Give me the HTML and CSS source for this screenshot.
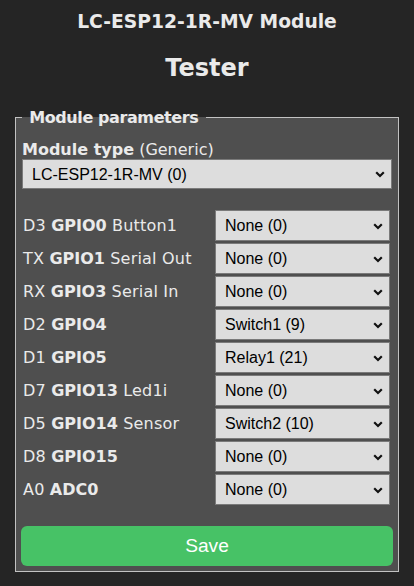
FILE: index.html
```html
<!DOCTYPE html>
<html>
<head>
<meta charset="utf-8">
<title>LC-ESP12-1R-MV Module - Configure Module</title>
<link rel="stylesheet" href="styles.css">
</head>
<body>
<div class="page">
  <header class="head">
    <h3 class="dev">LC-ESP12-1R-MV Module</h3>
    <h2 class="name">Tester</h2>
  </header>
  <fieldset class="params">
    <legend class="legend"><b>&nbsp;Module parameters&nbsp;</b></legend>
    <div class="mtype"><b>Module type</b> (Generic)</div>
    <div class="sel">
      <select class="select"><option>LC-ESP12-1R-MV (0)</option></select>
      <svg class="chev" width="10" height="7" viewBox="0 0 10 7"><polyline points="1.2,1.3 5,5 8.8,1.3" fill="none" stroke="#111" stroke-width="2.2"/></svg>
    </div>
    <div class="gpio">
      <div class="lbl">D3 <b>GPIO0</b> Button1</div>
      <div class="sel"><select class="select"><option>None (0)</option></select><svg class="chev" width="10" height="7" viewBox="0 0 10 7"><polyline points="1.2,1.3 5,5 8.8,1.3" fill="none" stroke="#111" stroke-width="2.2"/></svg></div>
      <div class="lbl">TX <b>GPIO1</b> Serial Out</div>
      <div class="sel"><select class="select"><option>None (0)</option></select><svg class="chev" width="10" height="7" viewBox="0 0 10 7"><polyline points="1.2,1.3 5,5 8.8,1.3" fill="none" stroke="#111" stroke-width="2.2"/></svg></div>
      <div class="lbl">RX <b>GPIO3</b> Serial In</div>
      <div class="sel"><select class="select"><option>None (0)</option></select><svg class="chev" width="10" height="7" viewBox="0 0 10 7"><polyline points="1.2,1.3 5,5 8.8,1.3" fill="none" stroke="#111" stroke-width="2.2"/></svg></div>
      <div class="lbl">D2 <b>GPIO4</b></div>
      <div class="sel"><select class="select"><option>Switch1 (9)</option></select><svg class="chev" width="10" height="7" viewBox="0 0 10 7"><polyline points="1.2,1.3 5,5 8.8,1.3" fill="none" stroke="#111" stroke-width="2.2"/></svg></div>
      <div class="lbl">D1 <b>GPIO5</b></div>
      <div class="sel"><select class="select"><option>Relay1 (21)</option></select><svg class="chev" width="10" height="7" viewBox="0 0 10 7"><polyline points="1.2,1.3 5,5 8.8,1.3" fill="none" stroke="#111" stroke-width="2.2"/></svg></div>
      <div class="lbl">D7 <b>GPIO13</b> Led1i</div>
      <div class="sel"><select class="select"><option>None (0)</option></select><svg class="chev" width="10" height="7" viewBox="0 0 10 7"><polyline points="1.2,1.3 5,5 8.8,1.3" fill="none" stroke="#111" stroke-width="2.2"/></svg></div>
      <div class="lbl">D5 <b>GPIO14</b> Sensor</div>
      <div class="sel"><select class="select"><option>Switch2 (10)</option></select><svg class="chev" width="10" height="7" viewBox="0 0 10 7"><polyline points="1.2,1.3 5,5 8.8,1.3" fill="none" stroke="#111" stroke-width="2.2"/></svg></div>
      <div class="lbl">D8 <b>GPIO15</b></div>
      <div class="sel"><select class="select"><option>None (0)</option></select><svg class="chev" width="10" height="7" viewBox="0 0 10 7"><polyline points="1.2,1.3 5,5 8.8,1.3" fill="none" stroke="#111" stroke-width="2.2"/></svg></div>
      <div class="lbl">A0 <b>ADC0</b></div>
      <div class="sel"><select class="select"><option>None (0)</option></select><svg class="chev" width="10" height="7" viewBox="0 0 10 7"><polyline points="1.2,1.3 5,5 8.8,1.3" fill="none" stroke="#111" stroke-width="2.2"/></svg></div>
    </div>
    <button class="save" type="button">Save</button>
  </fieldset>
</div>
</body>
</html>
```

FILE: styles.css
```css
html, body {
  margin: 0;
  padding: 0;
  background: #252525;
}
body {
  font-family: "DejaVu Sans", Verdana, sans-serif;
  font-size: 16px;
  color: #eaeaea;
}
.page {
  padding-top: 11px;
}
.head {
  text-align: center;
}
.dev {
  margin: 0;
  font-size: 18.72px;
  line-height: 22px;
  font-weight: bold;
}
.name {
  margin: 21px 0 0;
  font-size: 24px;
  line-height: 28px;
  font-weight: bold;
}
.params {
  margin: 26px 15px 0;
  padding: 13px 6px 5px;
  border: 1px solid #c2c2c2;
  background: #4f4f4f;
  min-width: 0;
}
.legend {
  padding: 0 2px;
  line-height: 19px;
  letter-spacing: -0.4px;
}
.mtype {
  line-height: 19px;
}
.sel {
  position: relative;
}
.select {
  display: block;
  width: 100%;
  height: 30px;
  margin: 0;
  padding: 0 0 0 9px;
  -webkit-appearance: none;
  appearance: none;
  background: #dddddd;
  color: #000;
  border: 1px solid #7a7a7a;
  border-radius: 0;
  font-family: "Liberation Sans", Arial, sans-serif;
  font-size: 16px;
}
.chev {
  position: absolute;
  right: 7px;
  top: 50%;
  margin-top: -3px;
  pointer-events: none;
}
.gpio {
  display: grid;
  grid-template-columns: 1fr 175px;
  grid-auto-rows: 31px;
  row-gap: 2px;
  align-items: center;
  margin-top: 21px;
  padding-right: 2px;
}
.gpio .select {
  height: 31px;
}
.lbl {
  padding-left: 1px;
  line-height: 19px;
  white-space: nowrap;
  letter-spacing: 0.2px;
}
.lbl b {
  letter-spacing: 0;
}
.save {
  display: block;
  width: calc(100% + 2px);
  height: 40px;
  margin: 21px -1px 0;
  border: 0;
  border-radius: 6px;
  background: #47c266;
  color: #fff;
  font-family: "Liberation Sans", Arial, sans-serif;
  font-size: 19.2px;
  line-height: 40px;
  padding: 0;
}
```
